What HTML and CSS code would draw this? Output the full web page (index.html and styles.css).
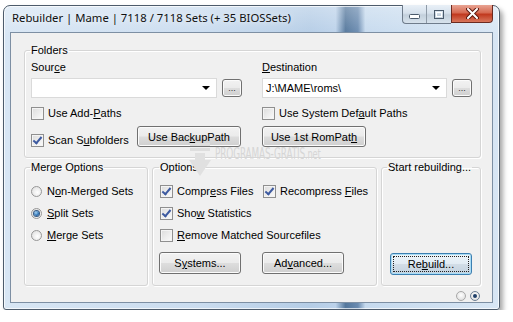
FILE: index.html
```html
<!DOCTYPE html>
<html lang="en">
<head>
  <meta charset="UTF-8">
  <title>Rebuilder</title>
  <link rel="stylesheet" href="styles.css">
</head>
<body>
  <div class="window">
    <div class="titlebar">
      <span class="title">Rebuilder | Mame | 7118 / 7118 Sets (+ 35 BIOSSets)</span>
      <div class="caption-buttons">
        <div class="cap-group">
          <span class="cap cap-min">
            <svg width="11" height="5" viewBox="0 0 11 5"><rect x="0.5" y="0.5" width="10" height="4" rx="1" fill="#fff" stroke="#4b5a6b"/></svg>
          </span>
          <span class="cap cap-max">
            <svg width="10" height="9" viewBox="0 0 10 9"><rect x="0.5" y="0.5" width="9" height="8" fill="none" stroke="#4b5a6b"/><rect x="2.5" y="2.5" width="5" height="4" fill="none" stroke="#fff"/></svg>
          </span>
        </div>
        <span class="cap cap-close">
          <svg width="13" height="11" viewBox="0 0 13 11"><path d="M2 1 L11 10 M11 1 L2 10" stroke="#5b1a10" stroke-width="4" stroke-linecap="round"/><path d="M2 1 L11 10 M11 1 L2 10" stroke="#fff" stroke-width="2" stroke-linecap="round"/></svg>
        </span>
      </div>
    </div>

    <div class="client">
      <fieldset class="group folders">
        <legend>Folders</legend>
        <div class="folder-cols">
          <div class="folder-col">
            <div class="field-label">Sour<u>c</u>e</div>
            <div class="path-row">
              <div class="combo"><span class="combo-text"></span><span class="combo-arrow"></span></div>
              <button class="btn btn-browse">...</button>
            </div>
            <label class="check"><span class="box"></span><span>Use Add-<u>P</u>aths</span></label>
            <div class="check-row">
              <label class="check checked wide"><span class="box"></span><span>Scan S<u>u</u>bfolders</span></label>
              <button class="btn btn-path">Use Bac<u>k</u>upPath</button>
            </div>
          </div>
          <div class="folder-col">
            <div class="field-label"><u>D</u>estination</div>
            <div class="path-row">
              <div class="combo"><span class="combo-text">J:\MAME\roms\</span><span class="combo-arrow"></span></div>
              <button class="btn btn-browse">...</button>
            </div>
            <label class="check"><span class="box"></span><span>Use System Def<u>a</u>ult Paths</span></label>
            <div class="check-row">
              <button class="btn btn-path">Use 1st RomPat<u>h</u></button>
            </div>
          </div>
        </div>
      </fieldset>

      <div class="bottom-groups">
        <fieldset class="group merge">
          <legend>Merge Options</legend>
          <div class="stack">
            <label class="radio"><span class="dot"></span><span>N<u>o</u>n-Merged Sets</span></label>
            <label class="radio checked"><span class="dot"></span><span><u>S</u>plit Sets</span></label>
            <label class="radio"><span class="dot"></span><span><u>M</u>erge Sets</span></label>
          </div>
        </fieldset>

        <fieldset class="group options">
          <legend>Options</legend>
          <div class="options-grid">
            <label class="check checked"><span class="box"></span><span>Compr<u>e</u>ss Files</span></label>
            <label class="check checked"><span class="box"></span><span>Recompress <u>F</u>iles</span></label>
            <label class="check checked"><span class="box"></span><span>Sho<u>w</u> Statistics</span></label>
            <span></span>
            <label class="check full"><span class="box"></span><span><u>R</u>emove Matched Sourcefiles</span></label>
            <button class="btn btn-action">S<u>y</u>stems...</button>
            <button class="btn btn-action">Ad<u>v</u>anced...</button>
          </div>
        </fieldset>

        <fieldset class="group rebuild">
          <legend>Start rebuilding...</legend>
          <button class="btn btn-action btn-default"><span class="focus-ring">Re<u>b</u>uild...</span></button>
        </fieldset>
      </div>

      <div class="pager">
        <span class="page-dot"></span>
        <span class="page-dot active"></span>
      </div>

      <div class="watermark">
        <svg class="wm-icon" width="24" height="34" viewBox="0 0 24 34">
          <rect x="2" y="0" width="20" height="3" fill="#dedede"/>
          <rect x="2" y="5" width="20" height="3" fill="#dedede"/>
          <path d="M7 10 H17 V17 H23 L12 33 L1 17 H7 Z" fill="#e0e0e0"/>
        </svg>
        <span class="wm-text">PROGRAMAS-GRATIS<small>.net</small></span>
      </div>
    </div>
  </div>
</body>
</html>
```

FILE: styles.css
```css
* {
  box-sizing: border-box;
}

body {
  margin: 0;
  background: #ffffff;
  font-family: "Liberation Sans", Arial, sans-serif;
  font-size: 11px;
  color: #000;
}

u {
  text-decoration: underline;
  text-underline-offset: 1px;
}

/* window frame */
.window {
  margin: 5px 0 0 3px;
  width: 497px;
  height: 305px;
  border: 1px solid #4d5b6b;
  border-radius: 7px 7px 3px 3px;
  padding: 0 6px 6px 6px;
  background:
    linear-gradient(180deg, rgba(255, 255, 255, 0.3), rgba(255, 255, 255, 0) 30px),
    linear-gradient(90deg, #d8e6f4 0, #cadcef 40%, #b5cde6 62%, #bcd2ea 67%, #54779c 69%, #6a8bb0 71.5%, #c6daee 73%, #d8e6f4 100%);
  box-shadow: 3px 4px 5px rgba(0, 0, 0, 0.35), inset 0 0 0 1px rgba(255, 255, 255, 0.7);
  position: relative;
}

.titlebar {
  height: 26px;
  display: flex;
  align-items: flex-start;
  justify-content: space-between;
}

.title {
  font-family: "Noto Sans", "Open Sans", sans-serif;
  font-size: 11.3px;
  line-height: 24px;
  padding-left: 2px;
  color: #101010;
  text-shadow: 0 0 6px rgba(255, 255, 255, 0.9);
}

.caption-buttons {
  display: flex;
  margin-top: -1px;
}

.cap-group {
  display: flex;
  border: 1px solid #6f7c8b;
  border-top: none;
  border-right: none;
  border-radius: 0 0 0 4px;
  overflow: hidden;
  background: linear-gradient(#e9f0f7, #d6e1ec 45%, #c3d0dc 55%, #d7e2ec);
}

.cap {
  height: 18px;
  display: flex;
  align-items: center;
  justify-content: center;
}

.cap-min {
  width: 24px;
  border-right: 1px solid #8e9aa7;
  padding-top: 5px;
}

.cap-max {
  width: 24px;
}

.cap-close {
  width: 42px;
  border: 1px solid #6b2a20;
  border-top: none;
  border-radius: 0 0 4px 0;
  background: linear-gradient(#e8a493, #d66a52 45%, #c1391f 55%, #d8765c);
}

/* client area */
.client {
  height: 271px;
  border: 1px solid #7d8fa3;
  background: #f0f0f0;
  padding: 11px 11px 0 13px;
  position: relative;
}

.group {
  margin: 0;
  border: 1px solid #d5d5d5;
  border-radius: 3px;
  box-shadow: inset 1px 1px 0 #ffffff, 1px 1px 0 #ffffff;
  min-width: 0;
}

.group legend {
  padding: 0 1px;
  margin-left: -1px;
  line-height: 13px;
  color: #000;
}

.folders {
  padding: 4px 8px 10px 6px;
}

.folder-cols {
  display: grid;
  grid-template-columns: 211px 210px;
  column-gap: 20px;
}

.field-label {
  line-height: 13px;
}

.path-row {
  display: flex;
  align-items: center;
  gap: 5px;
  margin-top: 4px;
  height: 20px;
}

.combo {
  flex: 1;
  height: 20px;
  background: #fff;
  border: 1px solid #dadada;
  display: flex;
  align-items: center;
  justify-content: space-between;
  padding: 0 6px 0 3px;
}

.combo-arrow {
  width: 0;
  height: 0;
  border-left: 4px solid transparent;
  border-right: 4px solid transparent;
  border-top: 4px solid #000;
}

/* checkboxes */
.check,
.radio {
  display: flex;
  align-items: center;
  gap: 4px;
  height: 13px;
  line-height: 13px;
  white-space: nowrap;
}

.folder-col > .check {
  margin-top: 9px;
}

.box {
  width: 13px;
  height: 13px;
  flex: none;
  border: 1px solid #8f8f8f;
  background: linear-gradient(135deg, #dcdcdc, #fbfbfb);
  box-shadow: inset 0 0 0 1px #f4f4f4;
  position: relative;
}

.check.checked .box::after {
  content: "";
  position: absolute;
  left: 3px;
  top: 0px;
  width: 3px;
  height: 7px;
  border-right: 2px solid #3d5aa0;
  border-bottom: 2px solid #3d5aa0;
  transform: rotate(40deg);
}

.check-row {
  display: flex;
  align-items: flex-end;
  margin-top: 6px;
  height: 21px;
}

.check.wide {
  width: 106px;
}

/* buttons */
.btn {
  font-family: inherit;
  font-size: 11px;
  color: #000;
  height: 21px;
  padding: 0;
  border: 1px solid #707070;
  border-radius: 3px;
  background: linear-gradient(#f2f2f2 0, #ebebeb 48%, #dddddd 52%, #cfcfcf 100%);
  box-shadow: inset 0 0 0 1px #fbfbfb;
}

.btn-browse {
  width: 20px;
  height: 18px;
  font-size: 9px;
  line-height: 14px;
  color: #333;
}

.btn-path {
  width: 104px;
}

.btn-action {
  width: 82px;
  height: 22px;
}

.btn-default {
  border-color: #3c7fb1;
  box-shadow: inset 0 0 0 1px #a9dcf5;
  background: linear-gradient(#eef5fa 0, #e2ecf4 48%, #d2dde7 52%, #c3d2df 100%);
  padding: 2px;
}

.focus-ring {
  display: block;
  height: 100%;
  line-height: 14px;
  border: 1px dotted #222;
}

/* bottom groups */
.bottom-groups {
  display: grid;
  grid-template-columns: 124px 225px 100px;
  column-gap: 4px;
  margin-top: 3px;
  height: 125px;
}

.merge {
  padding: 11px 4px 0 6px;
}

.stack {
  display: flex;
  flex-direction: column;
  gap: 9px;
}

.dot {
  width: 11px;
  height: 11px;
  flex: none;
  border-radius: 50%;
  border: 1px solid #979797;
  background: radial-gradient(circle at 60% 60%, #ffffff, #dadada);
  display: flex;
  align-items: center;
  justify-content: center;
}

.radio {
  gap: 5px;
}

.radio.checked .dot::after {
  content: "";
  width: 5px;
  height: 5px;
  border-radius: 50%;
  background: radial-gradient(circle at 40% 35%, #a6d4f5, #2a6fb2 60%, #1b3f6a);
  box-shadow: 0 0 0 1px #3a5c84;
}

.options {
  padding: 11px 4px 0 7px;
}

.options-grid {
  display: grid;
  grid-template-columns: 103px auto;
  row-gap: 9px;
  align-items: start;
}

.options-grid .full {
  grid-column: 1 / -1;
}

.options-grid .btn-action {
  margin-top: 1px;
  margin-left: -1px;
}

.rebuild {
  padding: 0 4px 0 6px;
}

.rebuild .btn-default {
  margin: 79px 0 0 2px;
}

.pager {
  display: flex;
  justify-content: flex-end;
  gap: 4px;
  margin-top: 5px;
  padding-right: 1px;
}

.page-dot {
  width: 10px;
  height: 10px;
  border-radius: 50%;
  border: 1px solid #a8a8a8;
  background: radial-gradient(circle at 50% 40%, #ffffff, #d8d8d8);
  display: flex;
  align-items: center;
  justify-content: center;
}

.page-dot.active {
  border-color: #6d7f94;
}

.page-dot.active::after {
  content: "";
  width: 4px;
  height: 4px;
  border-radius: 50%;
  background: #1f3f68;
}

/* screenshot-site watermark over the dialog */
.watermark {
  position: absolute;
  left: 177px;
  top: 110px;
  display: flex;
  align-items: flex-start;
  gap: 3px;
  color: #d6d6d6;
  pointer-events: none;
}

.wm-text {
  font-family: "DejaVu Sans Condensed", "Liberation Sans", sans-serif;
  font-size: 15px;
  line-height: 16px;
  margin-top: 3px;
  display: inline-block;
  transform: scaleX(0.66);
  transform-origin: left center;
  letter-spacing: -0.2px;
}

.wm-text small {
  font-size: 14px;
}
```
